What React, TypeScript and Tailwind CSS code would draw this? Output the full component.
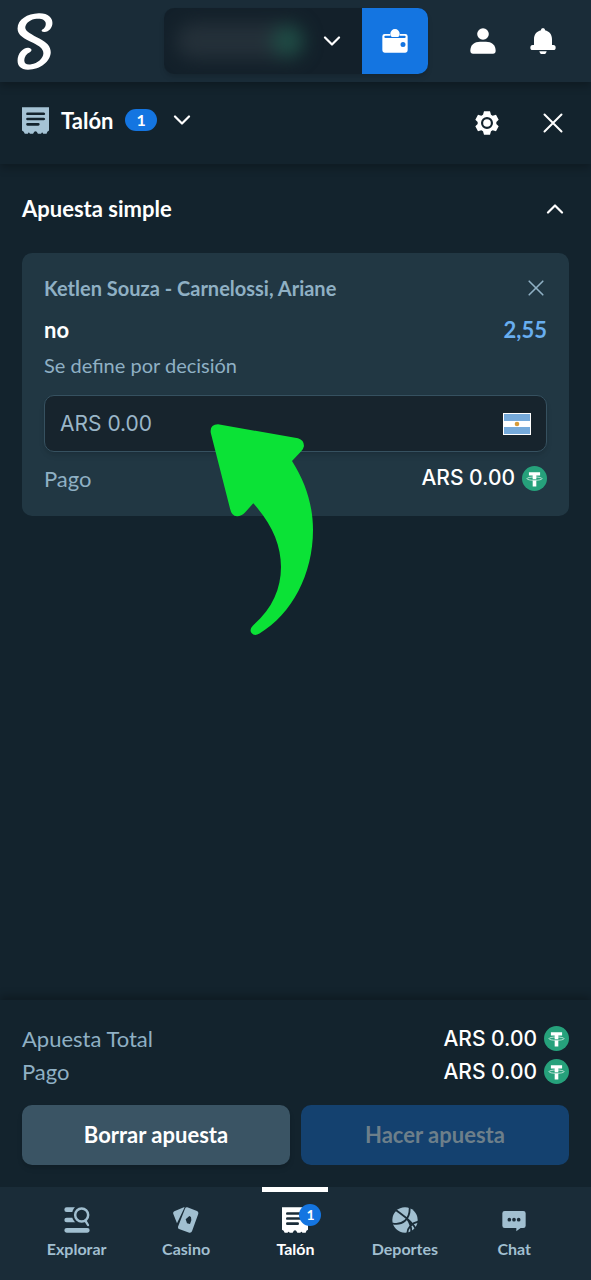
import React from 'react';

type IconProps = { className?: string };

const Logo = ({ className }: IconProps) => (
  <svg viewBox="52 37 106 170" className={className} fill="currentColor" aria-hidden="true">
    <path d="M126 87C135 83 138 75 137 67C135 55 120 52 104 55C86 59 76 70 76 82C77 93 98 103 118 113C140 124 152 137 152 154C151 181 122 206 84 206C62 206 53 195 53 179C53 157 70 140 85 141C96 142 97 150 91 153C79 158 73 168 73 178C73 189 81 192 94 190C112 187 130 173 130 157C130 144 118 136 99 126C72 112 53 104 53 83C53 57 82 39 116 38C144 37 157 51 157 67C157 81 147 93 133 94C125 94 123 90 126 87Z" />
  </svg>
);

const Chevron = ({ className }: IconProps) => (
  <svg viewBox="0 0 18 10" className={className} fill="none" stroke="currentColor" strokeWidth="2.2" strokeLinecap="round" strokeLinejoin="round" aria-hidden="true">
    <path d="M2 1.5L9 8.5L16 1.5" />
  </svg>
);

const Cross = ({ className }: IconProps) => (
  <svg viewBox="0 0 20 20" className={className} fill="none" stroke="currentColor" strokeWidth="2" strokeLinecap="round" aria-hidden="true">
    <path d="M1.500 1.500L18.500 18.500M18.500 1.500L1.500 18.500" />
  </svg>
);

const Wallet = ({ className }: IconProps) => (
  <svg viewBox="0 0 78 72" className={className} aria-hidden="true">
    <path fill="currentColor" fillRule="evenodd" d="M8 15H25V20H10Q7 20 7 23.500T10 27H68Q71 27 71 23.500T68 20H53V15H70Q77 15 77 22V64Q77 71 70 71H8Q1 71 1 64V22Q1 15 8 15ZM63 39A7.500 7.500 0 1 0 63 54A7.500 7.500 0 1 0 63 39Z" />
    <path fill="currentColor" d="M29 24A14 14 0 1 1 49 24Z" />
  </svg>
);

const User = ({ className }: IconProps) => (
  <svg viewBox="0 0 78 78" className={className} fill="currentColor" aria-hidden="true">
    <circle cx="39" cy="18" r="17.500" />
    <path d="M1 68C1 50 14 41 30 41H48C64 41 77 50 77 68C77 74 74 77 69 77H9C4 77 1 74 1 68Z" />
  </svg>
);

const Bell = ({ className }: IconProps) => (
  <svg viewBox="0 0 78 80" className={className} fill="currentColor" aria-hidden="true">
    <path d="M33 7C33 3 35 1 39 1S45 3 45 7C58 10 66 20 66 34V51H70C75 51 77 54 77 59S75 66 70 66H8C3 66 1 63 1 59S3 51 8 51H12V34C12 20 20 10 33 7Z" />
    <path d="M28 70H50C49 76 45 80 39 80S29 76 28 70Z" />
  </svg>
);

const Gear = ({ className }: IconProps) => (
  <svg viewBox="0 0 72 72" className={className} fill="currentColor" aria-hidden="true">
    <path fillRule="evenodd" d="M27 1H45L48 11L53 14L63 11L71 26L64 33V39L71 46L63 61L53 58L48 61L45 71H27L24 61L19 58L9 61L1 46L8 39V33L1 26L9 11L19 14L24 11ZM36 18A18 18 0 1 0 36 54A18 18 0 1 0 36 18Z" />
    <circle cx="36" cy="36" r="11.500" />
  </svg>
);

const Slip = ({ className }: IconProps) => (
  <svg viewBox="0 0 78 78" className={className} aria-hidden="true">
    <path fill="currentColor" fillRule="evenodd" d="M0 1H78V68Q72 70 71 77H61Q59 71 55 77H46Q39 63 32 77H23Q19 71 17 77H8Q6 70 0 68ZM16 16Q12 16 12 20T16 23H63Q67 23 67 20T63 16ZM16 31Q12 31 12 35T16 38H63Q67 38 67 35T63 31ZM16 46Q12 46 12 50T16 54H47Q51 54 51 50T47 46Z" />
  </svg>
);

const Tether = ({ className }: IconProps) => (
  <svg viewBox="0 0 76 76" className={className} aria-hidden="true">
    <circle cx="38" cy="38" r="38" fill="#26a17b" />
    <ellipse cx="38" cy="38.500" rx="23" ry="5" fill="none" stroke="#fff" strokeWidth="2" />
    <path fill="#fff" d="M21 19H55V28.500H43.500V40H32.500V28.500H21ZM32.500 44H43.500V62H32.500Z" />
  </svg>
);

const Flag = ({ className }: IconProps) => (
  <svg viewBox="0 0 28 22" className={className} aria-hidden="true">
    <path fill="#fff" d="M0 0H28V22H0Z" />
    <path fill="#75aadb" d="M1 1H27V8H1ZM1 14H27V21H1Z" />
    <circle cx="14" cy="11" r="2.300" fill="#d59b3a" />
  </svg>
);

const Explore = ({ className }: IconProps) => (
  <svg viewBox="0 0 78 78" className={className} fill="currentColor" aria-hidden="true">
    <path d="M8 1H33C29 5 26 10 25 15H8Q1 15 1 8T8 1ZM8 32H25C27 38 30 42 34 46H8Q1 46 1 39T8 32ZM8 63H70Q77 63 77 70T70 77H8Q1 77 1 70T8 63Z" />
    <circle cx="53" cy="24" r="19.500" fill="none" stroke="currentColor" strokeWidth="7.500" />
    <path d="M64 41L72 54" fill="none" stroke="currentColor" strokeWidth="7" strokeLinecap="round" />
  </svg>
);

const Cards = ({ className }: IconProps) => (
  <svg viewBox="0 0 78 78" className={className} fill="currentColor" aria-hidden="true">
    <path fillRule="evenodd" d="M43 1L72 12Q77 14 76 20L57 73Q55 78 49 77L18 66Q14 64 15 59L36 5Q38 0 43 1ZM49 27L38 37L42 49L51 51L55 40L54 30Z" />
    <path d="M35 1L12 49L1 21Q-1 16 4 13L29 2Q32 0 35 1Z" />
  </svg>
);

const Ball = ({ className }: IconProps) => (
  <svg viewBox="0 0 78 78" className={className} aria-hidden="true">
    <circle cx="39" cy="39" r="38" fill="currentColor" />
    <path fill="none" stroke="#1a2c38" strokeWidth="5.500" d="M12 9C25 20 57 38 72 66M0 49C31 56 55 38 53 0M46 79C46 63 60 47 79 44M45 35C53 45 58 59 58 76" />
  </svg>
);

const Chat = ({ className }: IconProps) => (
  <svg viewBox="0 0 78 78" className={className} aria-hidden="true">
    <path fill="currentColor" d="M11 12H67Q74 12 74 19V56Q74 63 67 63H59L46 73V63H11Q4 63 4 56V19Q4 12 11 12Z" />
    <g fill="#1a2c38">
      <circle cx="25" cy="38" r="5.500" />
      <circle cx="39" cy="38" r="5.500" />
      <circle cx="53" cy="38" r="5.500" />
    </g>
  </svg>
);

const Amount = () => (
  <span className="flex items-center gap-[7px] font-[Inter,sans-serif] text-[21px] font-medium text-white">
    ARS 0.00
    <Tether className="size-[25px]" />
  </span>
);

const tabs = [
  { label: 'Explorar', Icon: Explore },
  { label: 'Casino', Icon: Cards },
  { label: 'Talón', Icon: Slip, active: true },
  { label: 'Deportes', Icon: Ball },
  { label: 'Chat', Icon: Chat },
];

export default function App() {
  return (
    <div className="relative flex min-h-screen flex-col bg-[#13232d] font-[Lato,'Open_Sans',sans-serif] text-white">
      <header className="z-10 flex items-center justify-between bg-[#1a2c38] py-2 pr-[35px] pl-[17px] shadow-[0_4px_8px_rgba(0,0,0,0.25)]">
        <a href="#inicio" aria-label="Inicio">
          <Logo className="h-[57px] w-9" />
        </a>
        <div className="mr-[42px] ml-auto flex h-[66px] w-[264px] overflow-hidden rounded-[10px] bg-[#13202a] shadow-md">
          <button aria-label="Saldo" className="flex flex-1 items-center justify-between pr-[21px] pl-3">
            <span className="flex h-9 w-32 items-center justify-end rounded-full bg-[#243039] blur-[9px]">
              <span className="size-8 rounded-full bg-[#1f4c45]" />
            </span>
            <Chevron className="w-[18px]" />
          </button>
          <button aria-label="Cartera" className="flex w-[66px] items-center justify-center bg-[#1475e1]">
            <Wallet className="w-[26px]" />
          </button>
        </div>
        <div className="flex gap-[34px]">
          <button aria-label="Perfil"><User className="w-[26px]" /></button>
          <button aria-label="Notificaciones"><Bell className="w-[26px]" /></button>
        </div>
      </header>

      <div className="flex h-[82px] items-center justify-between px-[22px] shadow-[0_4px_8px_rgba(0,0,0,0.25)]">
        <button className="flex items-center gap-3 pb-1.5 text-[22px] font-bold">
          <Slip className="w-[27px] text-[#a5c3d5]" />
          Talón
          <span className="rounded-full bg-[#1475e1] px-[11px] text-base leading-[22px]">1</span>
          <Chevron className="ml-1 w-[18px]" />
        </button>
        <div className="flex items-center gap-11 pr-1.5">
          <button aria-label="Ajustes"><Gear className="w-6" /></button>
          <button aria-label="Cerrar"><Cross className="w-5" /></button>
        </div>
      </div>

      <main className="flex-1 px-[22px]">
        <button className="flex h-[89px] w-full items-center justify-between pr-[5px] text-[22px] font-bold">
          Apuesta simple
          <Chevron className="w-[18px] rotate-180" />
        </button>
        <section className="relative rounded-[10px] bg-[#213743] px-[22px] pt-[19px] pb-5">
          <div className="flex h-8 items-center justify-between text-xl font-bold text-[#8fb0c4]">
            <h2>Ketlen Souza - Carnelossi, Ariane</h2>
            <button aria-label="Quitar" className="pr-[3px]"><Cross className="w-4" /></button>
          </div>
          <div className="mt-[7px] flex h-9 items-center justify-between text-[22px] font-bold">
            <span>no</span>
            <span className="text-[#68aef0]">2,55</span>
          </div>
          <p className="h-9 text-xl leading-9 text-[#8fb0c4]">Se define por decisión</p>
          <label className="mt-3 flex h-[57px] items-center rounded-[10px] border border-[#365160] bg-[#17242d] px-[15px] shadow-md">
            <input aria-label="Importe" placeholder="ARS 0.00" className="min-w-0 flex-1 bg-transparent font-[Inter,sans-serif] text-[21px] outline-none placeholder:text-[#9ab6c8]" />
            <Flag className="w-7" />
          </label>
          <div className="mt-2 flex h-9 items-center justify-between text-[22px] text-[#8fb0c4]">
            <span>Pago</span>
            <Amount />
          </div>
          <svg viewBox="210 424 104 212" className="pointer-events-none absolute top-[171px] left-[188px] w-[104px]" aria-hidden="true">
            <path fill="#0be236" d="M218 424.300L298 438.200Q304 440 304 446Q303.500 449 301 451.500L292 461C306 483 313 506 313 530C313 574 292 614 259.500 633.500Q254.500 636.500 251.500 633Q249 629.500 253 625.500C272 609 281 589 281 567C281 545 272 524 253.300 503.300L245 512.500Q241 516.500 237 516.300Q231.500 516 230 508.500L210.800 433Q209.500 424.500 218 424.300Z" />
          </svg>
        </section>
      </main>

      <footer className="px-[22px] py-[22px] shadow-[0_-4px_8px_rgba(0,0,0,0.25)]">
        <div className="flex h-[33px] items-center justify-between text-[22px] text-[#8fb0c4]">
          <span>Apuesta Total</span>
          <Amount />
        </div>
        <div className="flex h-[33px] items-center justify-between text-[22px] text-[#8fb0c4]">
          <span>Pago</span>
          <Amount />
        </div>
        <div className="mt-[17px] grid grid-cols-2 gap-[11px] text-[22px] font-bold">
          <button className="h-[60px] rounded-[10px] bg-[#3a5464] pb-0.5 shadow-md">Borrar apuesta</button>
          <button disabled className="h-[60px] rounded-[10px] bg-[#14416f] pb-0.5 text-[#6d7f8a]">Hacer apuesta</button>
        </div>
      </footer>

      <nav className="grid h-[93px] grid-cols-5 bg-[#1a2c38] px-[22px]">
        {tabs.map(({ label, Icon, active }) => (
          <a
            key={label}
            href={`#${label.toLowerCase()}`}
            className={`relative flex flex-col items-center pt-5 text-base font-bold ${active ? 'text-white' : 'text-[#a1bfd0]'}`}
          >
            {active && <span className="absolute top-0 h-[5px] w-[66px] bg-white" />}
            <span className="relative">
              <Icon className="size-[26px]" />
              {active && (
                <span className="absolute -top-[3px] left-[17px] flex size-[22px] items-center justify-center rounded-full bg-[#1475e1] text-sm">1</span>
              )}
            </span>
            <span className="mt-1">{label}</span>
          </a>
        ))}
      </nav>
    </div>
  );
}
